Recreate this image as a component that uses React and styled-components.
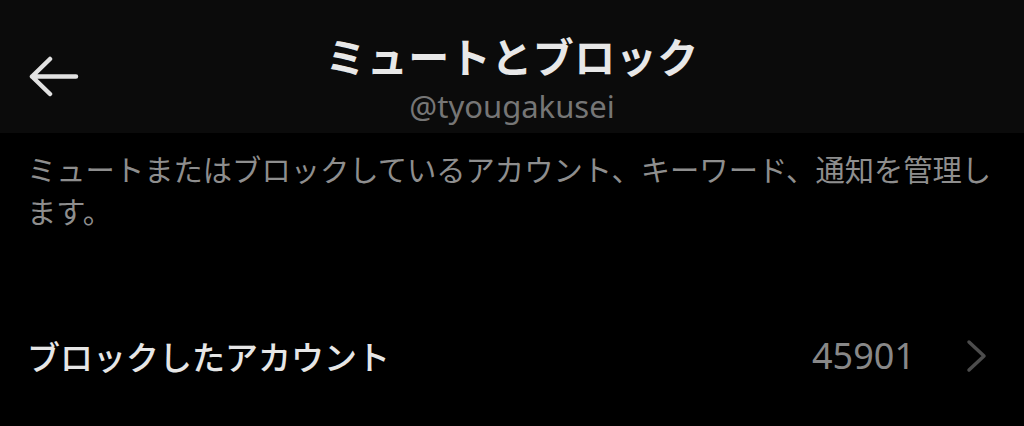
import React from "react";
import styled, { createGlobalStyle } from "styled-components";

const Global = createGlobalStyle`
  html, body { margin: 0; padding: 0; background: #000; }
  body {
    font-family: "Noto Sans", "Noto Sans CJK JP", sans-serif;
    -webkit-font-smoothing: antialiased;
  }
`;

const Page = styled.div`
  width: 1024px;
  height: 426px;
  background: #000;
  overflow: hidden;
  display: flex;
  flex-direction: column;
`;

const Header = styled.header`
  height: 133px;
  box-sizing: border-box;
  background: #0b0b0b;
  padding-top: 33px;
  display: grid;
  grid-template-columns: 1fr auto 1fr;
  align-items: start;
`;

const BackButton = styled.button`
  justify-self: start;
  margin: 23px 0 0 28px;
  padding: 0;
  border: 0;
  background: none;
  display: flex;
  cursor: pointer;
`;

const TitleBlock = styled.div`
  display: flex;
  flex-direction: column;
  align-items: center;
  gap: 11px;
`;

const Title = styled.h1`
  margin: 0;
  font-family: "Noto Sans CJK JP", sans-serif;
  font-weight: 700;
  font-size: 41px;
  line-height: 44px;
  color: #e8e8e8;
  letter-spacing: 0.5px;
`;

const Handle = styled.div`
  font-family: "Noto Sans", sans-serif;
  font-size: 31px;
  line-height: 36px;
  color: #767676;
`;

const Description = styled.p`
  margin: 0;
  padding: 14px 25px 0 27px;
  font-family: "Noto Sans CJK JP", sans-serif;
  font-size: 29.3px;
  line-height: 42px;
  color: #8e8e8e;
`;

const Row = styled.div`
  margin-top: 75px;
  height: 100px;
  display: flex;
  align-items: center;
  padding: 0 35px 0 27px;
`;

const Label = styled.div`
  flex: 1;
  font-family: "Noto Sans CJK JP", sans-serif;
  font-weight: 500;
  font-size: 33px;
  line-height: 40px;
  color: #e6e6e6;
`;

const Count = styled.div`
  font-family: "Noto Sans", sans-serif;
  font-size: 36px;
  line-height: 40px;
  color: #888;
  margin-right: 50px;
`;

const BackArrow = () => (
  <svg width="52" height="42" viewBox="0 0 52 42" fill="none">
    <path
      d="M4 20.5 H48 M22 3 L4 20.5 L22 38"
      stroke="#e2e2e2"
      strokeWidth="4.5"
      strokeLinecap="round"
      strokeLinejoin="round"
    />
  </svg>
);

const Chevron = () => (
  <svg width="24" height="36" viewBox="0 0 24 36" fill="none">
    <path
      d="M4 4 L19 18 L4 32"
      stroke="#4c4c4c"
      strokeWidth="3.5"
      strokeLinecap="round"
      strokeLinejoin="round"
    />
  </svg>
);

export default function App() {
  return (
    <Page>
      <Global />
      <Header>
        <BackButton aria-label="戻る">
          <BackArrow />
        </BackButton>
        <TitleBlock>
          <Title>ミュートとブロック</Title>
          <Handle>@tyougakusei</Handle>
        </TitleBlock>
        <div />
      </Header>
      <Description>
        ミュートまたはブロックしているアカウント、キーワード、通知を管理します。
      </Description>
      <Row>
        <Label>ブロックしたアカウント</Label>
        <Count>45901</Count>
        <Chevron />
      </Row>
    </Page>
  );
}
